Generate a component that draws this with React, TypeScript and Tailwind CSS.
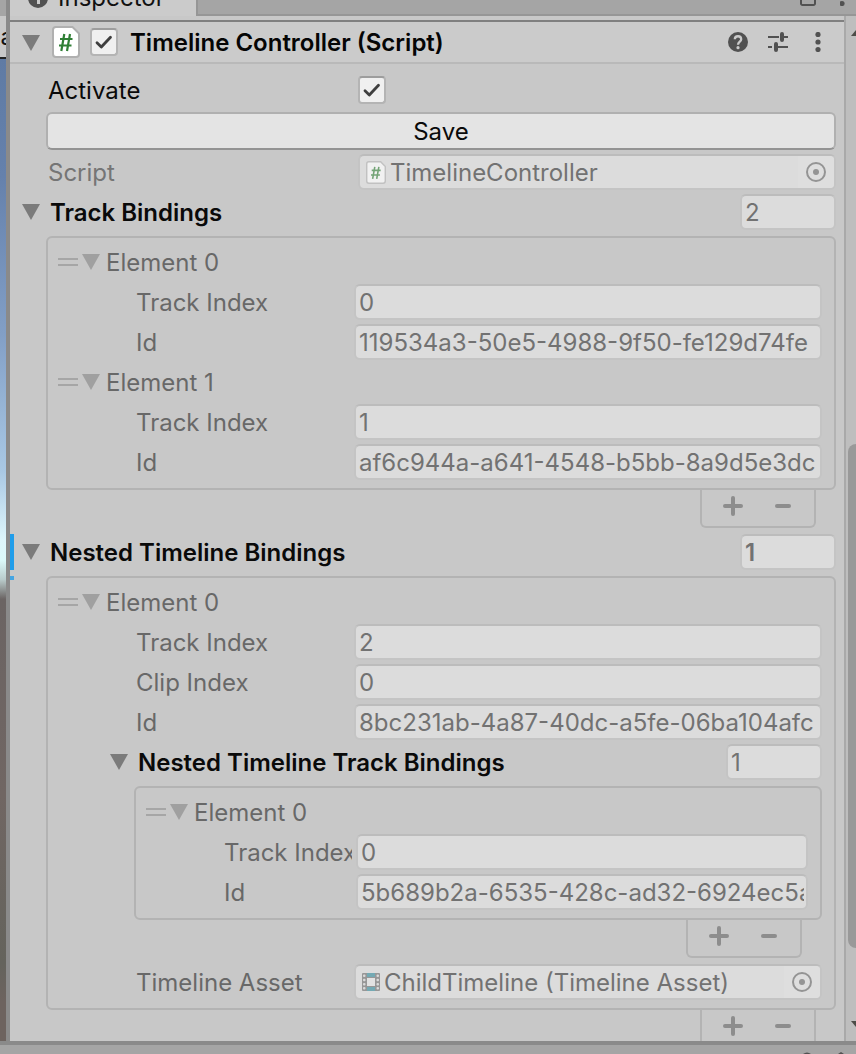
import { useId, useState } from "react";
import type { ReactNode } from "react";

const FONT = "font-['Inter','Liberation_Sans',sans-serif]";

function Triangle({ dim = false }: { dim?: boolean }) {
  return (
    <svg width="18" height="16" viewBox="0 0 18 16" className="shrink-0" aria-hidden="true">
      <path d="M0 0H18L9 16Z" fill={dim ? "#a0a0a0" : "#7b7b7b"} />
    </svg>
  );
}

function ScriptIcon({ small = false }: { small?: boolean }) {
  return (
    <svg
      width={small ? 20 : 28}
      height={small ? 23 : 32}
      viewBox="0 0 28 32"
      className={small ? "shrink-0 opacity-60" : "shrink-0"}
      aria-hidden="true"
    >
      <path
        d="M4 1H20.5L27 7.500V28a3 3 0 0 1-3 3H4a3 3 0 0 1-3-3V4a3 3 0 0 1 3-3Z"
        fill="#fff"
        stroke="#b0b0b0"
        strokeWidth="2"
      />
      <path d="M12.300 8L9.300 25M18 8L15 25M8 13H20.500M7 19.500H19.500" stroke="#2f7f34" strokeWidth="2.200" fill="none" />
    </svg>
  );
}

function FilmIcon() {
  return (
    <svg width="18" height="18" viewBox="0 0 18 18" className="shrink-0" aria-hidden="true">
      <rect width="18" height="18" rx="1" fill="#979797" />
      <rect x="5" width="8" height="4" fill="#74a9b3" />
      <rect x="5" y="14" width="8" height="4" fill="#74a9b3" />
      <rect x="5" y="5" width="8" height="8" fill="#e2e2e2" />
      {[1.5, 5.7, 9.900, 14.1].map((y) => (
        <g key={y} fill="#dadada">
          <rect x="1" y={y} width="2.500" height="2.500" rx="1" />
          <rect x="14.500" y={y} width="2.500" height="2.500" rx="1" />
        </g>
      ))}
    </svg>
  );
}

function Check({ label, id }: { label?: string; id?: string }) {
  return (
    <span className="grid size-7 shrink-0">
      <input
        id={id}
        type="checkbox"
        defaultChecked
        aria-label={label}
        className="peer col-start-1 row-start-1 size-7 appearance-none rounded border-2 border-[#b4b4b4] border-t-[#9d9d9d] bg-[#f0f0f0]"
      />
      <svg
        viewBox="0 0 28 28"
        className="pointer-events-none invisible col-start-1 row-start-1 size-7 peer-checked:visible"
        aria-hidden="true"
      >
        <path d="M7 14.800L11.300 19L20.500 9.200" fill="none" stroke="#3f3f3f" strokeWidth="2.800" strokeLinecap="round" strokeLinejoin="round" />
      </svg>
    </span>
  );
}

const FIELD = "rounded-md border-2 border-[#c4c4c4] border-t-[#bcbcbc] bg-[#dcdcdc] text-[#727272]";

function Picker({ label }: { label: string }) {
  return (
    <button type="button" aria-label={label} className="ml-auto flex h-full w-9 shrink-0 items-center justify-center bg-[#dedede]">
      <svg width="20" height="20" viewBox="0 0 20 20" aria-hidden="true">
        <circle cx="10" cy="10" r="9" fill="none" stroke="#949494" strokeWidth="2" />
        <circle cx="10" cy="10" r="3" fill="#949494" />
      </svg>
    </button>
  );
}

function ObjectField({ icon, text, label }: { icon: ReactNode; text: string; label: string }) {
  return (
    <div className={`flex h-9 min-w-0 flex-1 items-center gap-1 overflow-hidden pl-1.5 ${FIELD}`}>
      {icon}
      <span className="truncate pt-0.5">{text}</span>
      <Picker label={label} />
    </div>
  );
}

function Property({ label, value, nested = false }: { label: string; value: string; nested?: boolean }) {
  const id = useId();
  return (
    <div className="flex h-10 items-center pr-3 pl-[88px]">
      <label
        htmlFor={id}
        className={`shrink-0 overflow-hidden pt-0.5 whitespace-nowrap ${nested ? "mr-1 w-32" : "w-[218px]"}`}
      >
        {label}
      </label>
      <input id={id} readOnly defaultValue={value} className={`h-9 min-w-0 flex-1 pr-0.5 pl-[3px] outline-none ${FIELD}`} />
    </div>
  );
}

function Element({ title, children }: { title: string; children: ReactNode }) {
  const [open, setOpen] = useState(true);
  return (
    <>
      <button type="button" aria-expanded={open} onClick={() => setOpen(!open)} className="flex h-10 w-full items-center pl-2.5">
        <span className="mr-1 h-2 w-5 border-y-2 border-[#a6a6a6]" />
        <Triangle dim />
        <span className="ml-1.5 pt-0.5">{title}</span>
      </button>
      {open && children}
    </>
  );
}

function ListHeader({
  title,
  size,
  open,
  onToggle,
  bold = false,
}: {
  title: string;
  size: string;
  open: boolean;
  onToggle: () => void;
  bold?: boolean;
}) {
  return (
    <div className="flex h-10 items-center">
      <button
        type="button"
        aria-expanded={open}
        onClick={onToggle}
        className="flex min-w-0 flex-1 items-center gap-2.5 font-semibold whitespace-nowrap text-[#0a0a0a]"
      >
        <Triangle />
        <span className="pt-0.5">{title}</span>
      </button>
      <input
        readOnly
        aria-label={`${title} size`}
        defaultValue={size}
        className={`h-9 w-24 pl-[3px] outline-none ${bold ? "font-semibold" : ""} ${FIELD}`}
      />
    </div>
  );
}

function BindingList({
  title,
  size,
  bold,
  children,
}: {
  title: string;
  size: string;
  bold?: boolean;
  children: ReactNode;
}) {
  const [open, setOpen] = useState(true);
  return (
    <section>
      <ListHeader title={title} size={size} bold={bold} open={open} onToggle={() => setOpen(!open)} />
      {open && (
        <div className="ml-6">
          <div className="mt-1 rounded-md border-2 border-[#b3b3b3] pt-1 pb-1.5">{children}</div>
          <div className="mr-5 mb-1 ml-auto flex h-[38px] w-29 items-start justify-center gap-8 rounded-b-md border-2 border-t-0 border-[#b3b3b3] pt-1.5 pr-0.5">
            <button type="button" aria-label={`Add to ${title}`}>
              <svg width="20" height="20" viewBox="0 0 20 20" aria-hidden="true">
                <path d="M2 10H18M10 2V18" stroke="#8d8d8d" strokeWidth="4" strokeLinecap="round" />
              </svg>
            </button>
            <button type="button" aria-label={`Remove from ${title}`}>
              <svg width="16" height="20" viewBox="0 0 16 20" aria-hidden="true">
                <path d="M2 10H14" stroke="#8d8d8d" strokeWidth="4" strokeLinecap="round" />
              </svg>
            </button>
          </div>
        </div>
      )}
    </section>
  );
}

function ComponentHeader() {
  return (
    <header className="flex h-11 shrink-0 items-center border-y-2 border-t-[#808080] border-b-[#b9b9b9] bg-[#cbcbcb] pr-4 pl-3">
      <button type="button" aria-label="Toggle component" className="mr-3 pt-0.5">
        <Triangle />
      </button>
      <ScriptIcon />
      <span className="mx-2.5 flex">
        <Check label="Enable component" />
      </span>
      <h1 className="ml-0.5 truncate pt-0.5 font-semibold text-[#050505]">Timeline Controller (Script)</h1>
      <div className="ml-auto flex items-center gap-5 text-[#515151]">
        <button type="button" aria-label="Help">
          <svg width="20" height="20" viewBox="0 0 20 20" aria-hidden="true">
            <circle cx="10" cy="10" r="10" fill="currentColor" />
            <path d="M6.800 7.300C6.800 3.200 13.200 3.200 13.200 7.300C13.200 9.700 10 9.700 10 12.800" fill="none" stroke="#cbcbcb" strokeWidth="2.300" />
            <circle cx="10" cy="15.700" r="1.600" fill="#cbcbcb" />
          </svg>
        </button>
        <button type="button" aria-label="Presets">
          <svg width="20" height="20" viewBox="0 0 20 20" aria-hidden="true">
            <path d="M0 5H11M16 5H20M0 15H4M9 15H20" stroke="currentColor" strokeWidth="2" />
            <path d="M14 2V8M8 12V18" stroke="currentColor" strokeWidth="4" strokeLinecap="round" />
          </svg>
        </button>
        <button type="button" aria-label="More options">
          <svg width="20" height="20" viewBox="0 0 20 20" aria-hidden="true" fill="currentColor">
            <circle cx="10" cy="2.500" r="2.600" />
            <circle cx="10" cy="10" r="2.600" />
            <circle cx="10" cy="17.500" r="2.600" />
          </svg>
        </button>
      </div>
    </header>
  );
}

function TabBar() {
  return (
    <div className="flex h-4 shrink-0 items-stretch overflow-hidden bg-[#a5a5a5]">
      <div className="flex w-[186px] items-end gap-2.5 bg-[#cbcbcb] pb-1.5 pl-[18px] text-[#111]">
        <svg width="20" height="20" viewBox="0 0 20 20" className="mb-0.5 shrink-0" aria-hidden="true">
          <circle cx="10" cy="10" r="10" fill="#515151" />
          <path d="M8 9H10.500V16" fill="none" stroke="#cbcbcb" strokeWidth="3" />
        </svg>
        <span className="leading-6">Inspector</span>
      </div>
      <div className="flex flex-1 items-end justify-end gap-6 border-b-2 border-l-2 border-[#969696] text-[#515151]">
        <svg width="16" height="8" viewBox="0 0 16 8" className="mb-2" aria-hidden="true">
          <path d="M1 0V5.500a1.500 1.500 0 0 0 1.500 1.500H13.500A1.500 1.500 0 0 0 15 5.500V0" fill="none" stroke="currentColor" strokeWidth="2" />
        </svg>
        <svg width="16" height="8" viewBox="0 0 16 8" className="mb-2" aria-hidden="true">
          <circle cx="2" cy="5.500" r="2.600" fill="currentColor" />
        </svg>
      </div>
    </div>
  );
}

function Scrollbar() {
  return (
    <div className="flex w-3 shrink-0 flex-col items-end border-l-2 border-[#a9a9a9] bg-[#bebebe]">
      <svg width="5" height="6" viewBox="0 0 5 6" className="mt-3.5 shrink-0" aria-hidden="true">
        <path d="M0 6L5 0V6Z" fill="#4c4c47" />
      </svg>
      <div className="grow-[408]" />
      <div className="w-2 grow-[504] rounded-l-lg bg-[#999]" />
      <div className="grow-[73]" />
      <svg width="5" height="6" viewBox="0 0 5 6" className="mb-3.5 shrink-0" aria-hidden="true">
        <path d="M0 0H5V6Z" fill="#4c4c47" />
      </svg>
    </div>
  );
}

export default function App() {
  return (
    <div className={`flex h-screen flex-col overflow-hidden bg-[#c8c8c8] text-2xl leading-7 text-[#686868] ${FONT}`}>
      <div className="flex min-h-0 flex-1">
        <aside className="flex w-1.5 shrink-0 flex-col overflow-hidden">
          <div className="h-4 shrink-0 bg-[#a5a5a5]" />
          <div className="flex h-[43px] shrink-0 items-center justify-end border-b-2 border-[#222] bg-[#c8c8c8] text-[#111]">
            <span className="-mr-2">a</span>
          </div>
          <div className="flex-1 bg-[linear-gradient(#5f7ba4_0%,#6581ac_12%,#829fc6_28%,#a9c8e4_42%,#def6fb_49%,#dcfafa_51%,#b9cbcb_53%,#6b6463_55%,#706663_75%,#64635c_92%,#6d635f_96%,#6d635f_100%)]" />
        </aside>
        <div className="w-1 shrink-0 bg-[#8a8a8a]" />
        <main className="flex min-w-0 flex-1 flex-col">
          <TabBar />
          <div className="flex min-h-0 flex-1">
            <div className="min-w-0 flex-1 overflow-hidden pt-1">
              <ComponentHeader />
              <div className="pt-1.5 pr-2 pl-3">
                <div className="ml-6">
                  <div className="flex h-10 items-center text-[#0a0a0a]">
                    <label htmlFor="activate" className="w-[312px] shrink-0 pt-0.5 pl-0.5">
                      Activate
                    </label>
                    <Check id="activate" />
                  </div>
                  <button
                    type="button"
                    className="my-0.5 block h-[38px] w-full rounded-md border-2 border-[#b0b0b0] border-b-[#939393] bg-[#e4e4e4] pt-0.5 text-[#0a0a0a]"
                  >
                    Save
                  </button>
                  <div className="flex h-10 items-center">
                    <span className="w-[312px] shrink-0 pt-0.5 pl-0.5 text-[#757575]">Script</span>
                    <ObjectField icon={<ScriptIcon small />} text="TimelineController" label="Select script" />
                  </div>
                </div>

                <BindingList title="Track Bindings" size="2">
                  <Element title="Element 0">
                    <Property label="Track Index" value="0" />
                    <Property label="Id" value="119534a3-50e5-4988-9f50-fe129d74fe" />
                  </Element>
                  <Element title="Element 1">
                    <Property label="Track Index" value="1" />
                    <Property label="Id" value="af6c944a-a641-4548-b5bb-8a9d5e3dc" />
                  </Element>
                </BindingList>

                <div className="relative">
                  <div className="absolute top-0.5 -left-3 h-9 w-1 bg-[#209dea]" />
                  <div className="absolute top-11 -left-3 h-1 w-1 bg-[#45a5e2]" />
                  <BindingList title="Nested Timeline Bindings" size="1" bold>
                    <Element title="Element 0">
                      <Property label="Track Index" value="2" />
                      <Property label="Clip Index" value="0" />
                      <Property label="Id" value="8bc231ab-4a87-40dc-a5fe-06ba104afc" />
                      <div className="mr-3 ml-[62px]">
                        <BindingList title="Nested Timeline Track Bindings" size="1">
                          <Element title="Element 0">
                            <Property label="Track Index" value="0" nested />
                            <Property label="Id" value="5b689b2a-6535-428c-ad32-6924ec5a" nested />
                          </Element>
                        </BindingList>
                      </div>
                      <div className="flex h-10 items-center pr-3 pl-[88px]">
                        <span className="w-[218px] shrink-0 pt-0.5">Timeline Asset</span>
                        <ObjectField icon={<FilmIcon />} text="ChildTimeline (Timeline Asset)" label="Select timeline asset" />
                      </div>
                    </Element>
                  </BindingList>
                </div>
              </div>
            </div>
            <Scrollbar />
          </div>
        </main>
      </div>
      <footer className="flex h-[13px] shrink-0 items-end justify-end border-t-4 border-[#8a8a8a] bg-[#a5a5a5] pr-2.5">
        <svg width="44" height="2" viewBox="0 0 44 2" aria-hidden="true">
          <path d="M1 2Q5 -1 9 2ZM36 2L39 0L42 2Z" fill="#515151" />
        </svg>
      </footer>
    </div>
  );
}
